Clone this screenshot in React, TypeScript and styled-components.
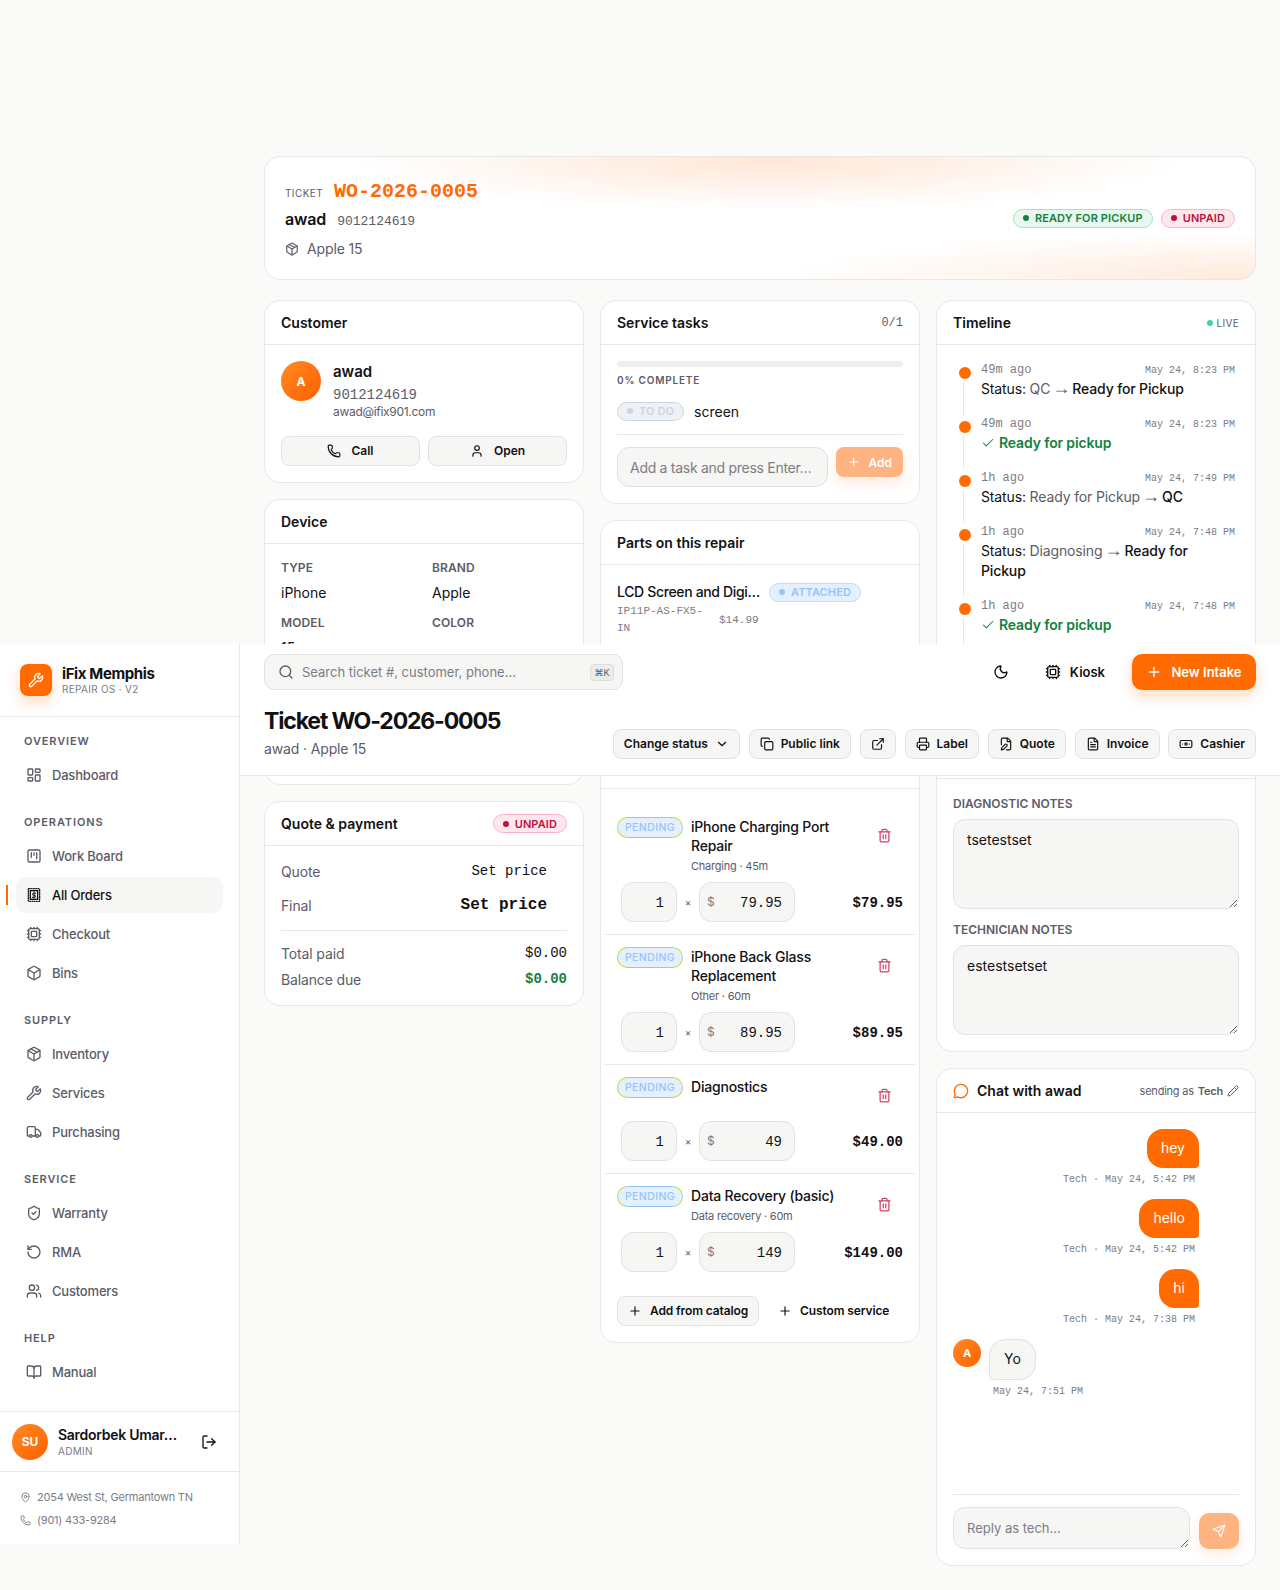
import React from "react";
import styled, { createGlobalStyle } from "styled-components";
import {
  BookOpen,
  Box,
  Banknote,
  Check,
  ChevronDown,
  Copy,
  Cpu,
  ExternalLink,
  FilePen,
  FileText,
  LayoutDashboard,
  LogOut,
  MapPin,
  MessageCircle,
  Moon,
  Package,
  Pencil,
  Phone,
  Plus,
  Printer,
  RotateCcw,
  Search,
  Send,
  ShieldCheck,
  SquareKanban,
  Trash2,
  Truck,
  User,
  Users,
  Wrench,
} from "lucide-react";

const SANS = `Inter, "Noto Sans", sans-serif`;
const MONO = `"Liberation Mono", monospace`;
const ORANGE = "#ff6b00";
const INK = "#111114";
const MUTED = "#5c5c68";
const FAINT = "#7c7c86";
const LINE = "#e7e7e5";
const SURFACE = "#f6f6f4";

const GlobalStyle = createGlobalStyle`
  html, body { margin: 0; padding: 0; background: #fafaf8; }
  body { font-family: ${SANS}; color: ${INK}; }
  * { box-sizing: border-box; }
  input, textarea, button { font-family: inherit; }
`;

const Page = styled.div`
  position: relative;
  height: 1590px;
  overflow: hidden;
`;

const Content = styled.main`
  padding: 156px 24px 0 264px;
  display: flex;
  flex-direction: column;
  gap: 20px;
`;

const Hero = styled.section`
  height: 124px;
  padding: 0 20px;
  display: flex;
  align-items: center;
  justify-content: space-between;
  border: 1px solid ${LINE};
  border-radius: 16px;
  background:
    radial-gradient(ellipse 420px 54px at 51% 0, rgba(255, 107, 0, 0.17), rgba(255, 107, 0, 0) 100%),
    radial-gradient(ellipse 480px 46px at 100% 100%, rgba(255, 107, 0, 0.14), rgba(255, 107, 0, 0) 100%),
    #fff;
`;

const HeroInfo = styled.div`
  display: flex;
  flex-direction: column;
  padding-top: 2px;
`;

const TicketRow = styled.div`
  display: flex;
  align-items: baseline;
  gap: 11px;
  margin-bottom: 3px;
`;

const TicketTag = styled.span`
  font-size: 10px;
  color: ${MUTED};
  letter-spacing: 0.04em;
`;

const TicketNumber = styled.span`
  font-family: ${MONO};
  font-weight: 700;
  font-size: 20px;
  line-height: 26px;
  color: ${ORANGE};
`;

const HeroCustomer = styled.div`
  display: flex;
  align-items: baseline;
  gap: 11px;
  margin-bottom: 6px;
  font-size: 16px;
  line-height: 22px;
  font-weight: 600;
  letter-spacing: -0.01em;
`;

const Mono = styled.span<{ $size?: number; $color?: string; $bold?: boolean }>`
  font-family: ${MONO};
  font-size: ${(p) => p.$size ?? 13}px;
  font-weight: ${(p) => (p.$bold ? 700 : 400)};
  color: ${(p) => p.$color ?? "inherit"};
  letter-spacing: 0;
`;

const HeroDevice = styled.div`
  display: flex;
  align-items: center;
  gap: 8px;
  font-size: 14px;
  line-height: 20px;
  letter-spacing: -0.01em;
  color: ${MUTED};
`;

const ChipRow = styled.div`
  display: flex;
  gap: 8px;
`;

const tones = {
  green: { text: "#15803d", bg: "#e8f8ee", line: "#a6e4bd" },
  red: { text: "#be123c", bg: "#ffe8ed", line: "#fdb3c2" },
  blue: { text: "#93c5fd", bg: "#e5f0ff", line: "#bfdbfe" },
  slate: { text: "#cbd5e1", bg: "#eef2f7", line: "#cbd5e1" },
};

const Chip = styled.span<{ $tone: keyof typeof tones }>`
  display: inline-flex;
  align-items: center;
  flex: none;
  gap: 6px;
  height: 19px;
  padding: 0 9px;
  border: 1px solid ${(p) => tones[p.$tone].line};
  border-radius: 999px;
  background: ${(p) => tones[p.$tone].bg};
  color: ${(p) => tones[p.$tone].text};
  font-size: 11px;
  font-weight: 600;
  letter-spacing: 0.01em;
  white-space: nowrap;

  &::before {
    content: "";
    width: 6px;
    height: 6px;
    border-radius: 50%;
    background: currentColor;
  }
`;

const PendingChip = styled.span`
  flex: none;
  width: 66px;
  height: 21px;
  display: inline-flex;
  align-items: center;
  justify-content: center;
  border: 1px solid transparent;
  border-radius: 11px;
  background:
    linear-gradient(#e5f0ff, #e5f0ff) padding-box,
    conic-gradient(
        #93c5fd 0 66deg,
        #c6e02a 70deg 84deg,
        #93c5fd 88deg 92deg,
        #c6e02a 96deg 110deg,
        #93c5fd 114deg 246deg,
        #c6e02a 250deg 264deg,
        #93c5fd 268deg 272deg,
        #c6e02a 276deg 290deg,
        #93c5fd 294deg
      )
      border-box;
  color: #93c5fd;
  font-size: 10.5px;
  font-weight: 500;
  letter-spacing: 0.04em;
`;

const Columns = styled.div`
  display: grid;
  grid-template-columns: repeat(3, 320px);
  gap: 16px;
  align-items: start;
`;

const Column = styled.div`
  display: flex;
  flex-direction: column;
  gap: 16px;
`;

const Card = styled.section<{ $height?: number }>`
  display: flex;
  flex-direction: column;
  height: ${(p) => (p.$height ? `${p.$height}px` : "auto")};
  overflow: hidden;
  background: #fff;
  border: 1px solid ${LINE};
  border-radius: 16px;
`;

const CardHead = styled.header`
  flex: none;
  height: 44px;
  padding: 0 16px;
  display: flex;
  align-items: center;
  justify-content: space-between;
  border-bottom: 1px solid ${LINE};
`;

const CardTitle = styled.h3`
  margin: 0;
  display: flex;
  align-items: center;
  gap: 8px;
  font-size: 14px;
  line-height: 20px;
  font-weight: 600;
`;

const CardBody = styled.div`
  padding: 16px;
`;

const QuoteBody = styled(CardBody)`
  padding: 15px 16px 16px;
`;

const NotesBody = styled(CardBody)`
  padding-top: 17px;
`;

const CustomerRow = styled.div`
  display: flex;
  gap: 12px;
`;

const Avatar = styled.div<{ $size: number; $font: number }>`
  flex: none;
  width: ${(p) => p.$size}px;
  height: ${(p) => p.$size}px;
  border-radius: 50%;
  display: flex;
  align-items: center;
  justify-content: center;
  background: linear-gradient(135deg, #ff8a24, #ff6000);
  color: #fff;
  font-size: ${(p) => p.$font}px;
  font-weight: 700;
`;

const CustomerName = styled.div`
  font-size: 15px;
  line-height: 20px;
  font-weight: 600;
  margin-top: 1px;
`;

const CustomerPhone = styled.div`
  font-family: ${MONO};
  font-size: 14px;
  line-height: 20px;
  color: ${MUTED};
  margin-top: 3px;
`;

const CustomerMail = styled.div`
  margin-top: -1px;
  font-size: 12px;
  line-height: 16px;
  letter-spacing: -0.025em;
  color: ${MUTED};
`;

const ButtonPair = styled.div`
  display: grid;
  grid-template-columns: 1fr 1fr;
  gap: 8px;
  margin-top: 16px;
`;

const Button = styled.button`
  height: 30px;
  padding: 0 10px 1px;
  display: inline-flex;
  align-items: center;
  justify-content: center;
  gap: 10px;
  background: ${SURFACE};
  border: 1px solid #e2e2e0;
  border-radius: 8px;
  color: ${INK};
  font-size: 12px;
  font-weight: 600;
  white-space: nowrap;
`;

const HeaderButton = styled(Button)`
  gap: 7px;
`;

const CatalogButton = styled(Button)`
  gap: 8px;
  letter-spacing: -0.01em;
`;

const GhostButton = styled(CatalogButton)`
  background: transparent;
  border-color: transparent;
`;

const DetailGrid = styled.dl`
  margin: 0;
  display: grid;
  grid-template-columns: 1fr 1fr;
  column-gap: 16px;
  row-gap: 12px;
`;

const FieldLabel = styled.dt`
  font-size: 12px;
  line-height: 16px;
  font-weight: 600;
  color: ${MUTED};
  letter-spacing: 0.01em;
  margin-bottom: 7px;
`;

const FieldValue = styled.dd`
  margin: 0;
  font-size: 14px;
  line-height: 20px;
`;

const ProgressTrack = styled.div`
  height: 6px;
  border-radius: 3px;
  background: #eeeeec;
`;

const ProgressLabel = styled.div`
  margin-top: 6px;
  font-size: 10px;
  line-height: 14px;
  font-weight: 600;
  letter-spacing: 0.08em;
  color: ${MUTED};
`;

const TaskRow = styled.div`
  display: flex;
  align-items: center;
  gap: 10px;
  height: 20px;
  margin-top: 14px;
  font-size: 14px;
`;

const Divider = styled.hr`
  margin: 13px 0 12px;
  border: 0;
  border-top: 1px solid ${LINE};
`;

const QuoteDivider = styled(Divider)`
  margin: 15px 0 12px;
`;

const TaskForm = styled.div`
  display: flex;
  align-items: flex-start;
  gap: 8px;
`;

const TextInput = styled.input`
  min-width: 0;
  flex: 1;
  height: 40px;
  padding: 0 12px;
  background: ${SURFACE};
  border: 1px solid #e2e2e0;
  border-radius: 12px;
  font-size: 14px;
  letter-spacing: -0.02em;
  color: ${INK};

  &::placeholder {
    color: ${FAINT};
  }
`;

const PrimarySoft = styled.button`
  flex: none;
  width: 67px;
  height: 30px;
  padding: 0 11px;
  display: inline-flex;
  align-items: center;
  gap: 8px;
  background: #ffb380;
  border: 0;
  border-radius: 8px;
  color: #fff;
  font-size: 12px;
  font-weight: 600;
  box-shadow: 0 6px 14px rgba(255, 107, 0, 0.14);
`;

const PartTop = styled.div`
  display: flex;
  align-items: center;
  gap: 11px;
  margin-top: 1px;
`;

const PartName = styled.div`
  width: 141px;
  font-size: 14px;
  line-height: 20px;
  font-weight: 500;
  letter-spacing: -0.025em;
  white-space: nowrap;
`;

const PartMeta = styled.div`
  display: flex;
  align-items: center;
  gap: 12px;
  margin-top: 1px;
  font-family: ${MONO};
  font-size: 11px;
  line-height: 17px;
  color: ${FAINT};
`;

const PartSku = styled.div`
  width: 90px;
`;

const LiveTag = styled.span`
  display: inline-flex;
  align-items: center;
  gap: 4px;
  font-size: 10px;
  color: ${MUTED};
  letter-spacing: 0.03em;

  &::before {
    content: "";
    width: 6px;
    height: 6px;
    border-radius: 50%;
    background: #34d8a4;
  }
`;

const TimelineEntry = styled.div`
  display: flex;
  gap: 10px;
  padding-left: 6px;
  padding-right: 4px;
`;

const Rail = styled.div`
  flex: none;
  width: 12px;
  padding-top: 6px;
  display: flex;
  flex-direction: column;
  gap: 3px;

  &::before {
    content: "";
    flex: none;
    width: 12px;
    height: 12px;
    border-radius: 50%;
    background: ${ORANGE};
  }

  &::after {
    content: "";
    flex: 1;
    width: 1px;
    margin-left: 4px;
    background: ${LINE};
  }
`;

const EntryBody = styled.div`
  flex: 1;
  padding-bottom: 16px;
`;

const EntryTime = styled.div`
  display: flex;
  justify-content: space-between;
  align-items: center;
  height: 16px;
  margin-top: 1px;
  font-family: ${MONO};
  font-size: 12px;
  color: ${FAINT};
`;

const EntryDate = styled.span`
  font-size: 10px;
`;

const EntryText = styled.div`
  margin-top: 1px;
  font-size: 14px;
  line-height: 20px;
  letter-spacing: -0.01em;
`;

const Dim = styled.span`
  color: ${MUTED};
`;

const Arrow = styled.span`
  margin: 0 2px;
  font-family: "Liberation Sans", sans-serif;
  font-size: 18px;
  line-height: 1;
  letter-spacing: 0;
  color: ${MUTED};
`;

const Strong = styled.span`
  font-weight: 500;
`;

const GoodText = styled.div`
  display: flex;
  align-items: center;
  gap: 4px;
  color: #15803d;
  font-weight: 600;
`;

const QuoteRow = styled.div<{ $gap?: number }>`
  display: flex;
  align-items: center;
  justify-content: space-between;
  height: 20px;
  margin-top: ${(p) => p.$gap ?? 0}px;
  font-size: 14px;
  letter-spacing: -0.01em;
  color: ${MUTED};
`;

const PriceSlot = styled.span<{ $big?: boolean }>`
  padding-right: 20px;
  font-family: ${MONO};
  font-size: ${(p) => (p.$big ? 16 : 14)}px;
  font-weight: ${(p) => (p.$big ? 700 : 400)};
  letter-spacing: 0;
  color: ${INK};
`;

const ServiceBody = styled.div`
  padding: 16px 4px;
`;

const ServiceRow = styled.div<{ $last?: boolean }>`
  padding: 12px;
  border-bottom: 1px solid ${(p) => (p.$last ? "transparent" : LINE)};
`;

const ServiceHead = styled.div`
  display: flex;
  align-items: flex-start;
  gap: 8px;
  margin-bottom: 8px;
`;

const ServiceInfo = styled.div`
  flex: 1;
  min-height: 36px;
`;

const ServiceName = styled.div<{ $wide?: boolean }>`
  font-size: 14px;
  line-height: 19px;
  font-weight: 500;
  letter-spacing: -0.015em;
  max-width: ${(p) => (p.$wide ? "none" : "160px")};
`;

const ServiceSub = styled.div`
  margin-top: 3px;
  font-size: 11px;
  line-height: 16px;
  letter-spacing: -0.02em;
  color: ${MUTED};
`;

const TrashButton = styled.div`
  flex: none;
  width: 36px;
  height: 36px;
  margin-right: 1px;
  display: flex;
  align-items: center;
  justify-content: center;
  color: #d1436a;
`;

const PriceLine = styled.div`
  display: flex;
  align-items: center;
  padding-left: 4px;
`;

const AmountInput = styled.input<{ $width: number }>`
  width: ${(p) => p.$width}px;
  height: 40px;
  padding: 2px 12px 0;
  background: ${SURFACE};
  border: 1px solid #e2e2e0;
  border-radius: 12px;
  font-family: ${MONO};
  font-size: 14px;
  color: ${INK};
  text-align: right;
`;

const Times = styled.span`
  width: 22px;
  text-align: center;
  font-size: 10px;
  color: ${MUTED};
`;

const PriceBox = styled.div`
  position: relative;
  display: flex;
`;

const Dollar = styled.span`
  position: absolute;
  left: 8px;
  top: 12px;
  font-size: 12px;
  line-height: 16px;
  color: ${FAINT};
`;

const LineTotal = styled.span`
  margin-left: auto;
  margin-top: 2px;
  font-family: ${MONO};
  font-size: 14px;
  font-weight: 700;
`;

const ServiceActions = styled.div`
  display: flex;
  align-items: center;
  gap: 8px;
  padding: 11px 12px 0;
`;

const NoteLabel = styled.label`
  display: block;
  margin: 13px 0 7px;
  font-size: 12px;
  line-height: 16px;
  font-weight: 600;
  color: ${MUTED};

  &:first-child {
    margin-top: 0;
  }
`;

const NoteArea = styled.textarea`
  display: block;
  width: 100%;
  height: 90px;
  padding: 10px 13px;
  background: ${SURFACE};
  border: 1px solid #e2e2e0;
  border-radius: 12px;
  font-size: 14px;
  line-height: 20px;
  color: ${INK};
`;

const SendingAs = styled.div`
  display: flex;
  align-items: center;
  gap: 4px;
  font-size: 11px;
  letter-spacing: -0.02em;
  color: ${MUTED};

  b {
    font-weight: 600;
  }
`;

const ChatLog = styled.div`
  flex: 1;
  padding: 16px 56px 0 16px;
  display: flex;
  flex-direction: column;
`;

const Outgoing = styled.div`
  align-self: flex-end;
  display: flex;
  flex-direction: column;
  align-items: flex-end;
  margin-bottom: 12px;
`;

const BubbleOut = styled.div`
  padding: 8px 14px 10px;
  border-radius: 16px 16px 4px 16px;
  background: ${ORANGE};
  color: #fff;
  font-size: 14px;
  line-height: 21px;
`;

const ChatMeta = styled.div`
  margin-top: 5px;
  padding: 0 4px;
  font-family: ${MONO};
  font-size: 10px;
  line-height: 14px;
  color: ${FAINT};
  white-space: pre;
`;

const Incoming = styled.div`
  display: flex;
  gap: 8px;
`;

const BubbleIn = styled.div`
  align-self: flex-start;
  padding: 8px 14px 10px;
  background: ${SURFACE};
  border: 1px solid #e2e2e0;
  border-radius: 16px 16px 16px 4px;
  font-size: 14px;
  line-height: 21px;
`;

const IncomingStack = styled.div`
  display: flex;
  flex-direction: column;
  align-items: flex-start;
`;

const Composer = styled.div`
  margin: 0 16px 16px;
  padding-top: 12px;
  border-top: 1px solid ${LINE};
  display: flex;
  align-items: flex-end;
  gap: 9px;
`;

const ComposerInput = styled.textarea`
  flex: 1;
  min-width: 0;
  height: 42px;
  padding: 10px 13px;
  background: ${SURFACE};
  border: 1px solid #e2e2e0;
  border-radius: 12px;
  font-size: 13px;
  line-height: 20px;

  &::placeholder {
    color: ${FAINT};
  }
`;

const SendButton = styled.button`
  flex: none;
  width: 40px;
  height: 36px;
  border: 0;
  border-radius: 10px;
  display: flex;
  align-items: center;
  justify-content: center;
  background: #ffb380;
  color: #fff;
  box-shadow: 0 6px 14px rgba(255, 107, 0, 0.12);
`;

const Shell = styled.div`
  position: absolute;
  top: 644px;
  left: 0;
  right: 0;
  height: 900px;
  display: flex;
  align-items: flex-start;
`;

const Sidebar = styled.aside`
  flex: none;
  width: 240px;
  height: 900px;
  display: flex;
  flex-direction: column;
  background: #fff;
  border-right: 1px solid ${LINE};
`;

const Brand = styled.div`
  flex: none;
  height: 73px;
  padding: 20px 20px 0;
  display: flex;
  gap: 10px;
  border-bottom: 1px solid ${LINE};
`;

const BrandMark = styled.div`
  flex: none;
  width: 32px;
  height: 32px;
  border-radius: 8px;
  display: flex;
  align-items: center;
  justify-content: center;
  background: ${ORANGE};
  color: #fff;
  box-shadow: 0 6px 14px rgba(255, 107, 0, 0.25);
`;

const BrandName = styled.div`
  font-size: 15px;
  line-height: 20px;
  font-weight: 700;
  letter-spacing: -0.025em;
`;

const BrandSub = styled.div`
  margin-top: -1px;
  font-size: 10px;
  line-height: 12px;
  color: ${FAINT};
  letter-spacing: 0.03em;
`;

const Nav = styled.nav`
  flex: 1;
  padding: 16px 16px 0;
  display: flex;
  flex-direction: column;
  gap: 21px;
`;

const NavGroup = styled.div`
  display: flex;
  flex-direction: column;
  gap: 3px;
`;

const NavLabel = styled.div`
  margin-bottom: 5px;
  padding-left: 8px;
  font-size: 11px;
  line-height: 16px;
  font-weight: 600;
  letter-spacing: 0.08em;
  color: ${MUTED};
`;

const NavItem = styled.a<{ $active?: boolean }>`
  position: relative;
  height: 36px;
  padding-left: 10px;
  display: flex;
  align-items: center;
  gap: 10px;
  border-radius: 10px;
  font-size: 13px;
  font-weight: 500;
  letter-spacing: -0.015em;
  color: ${(p) => (p.$active ? INK : MUTED)};
  background: ${(p) => (p.$active ? SURFACE : "transparent")};

  ${(p) =>
    p.$active &&
    `&::before {
      content: "";
      position: absolute;
      left: -10px;
      top: 8px;
      width: 2px;
      height: 20px;
      background: ${ORANGE};
    }`}
`;

const UserRow = styled.div`
  flex: none;
  height: 61px;
  padding: 0 12px;
  display: flex;
  align-items: center;
  gap: 10px;
  border-top: 1px solid ${LINE};
  border-bottom: 1px solid ${LINE};
`;

const UserInfo = styled.div`
  flex: 1;
  min-width: 0;
`;

const UserName = styled.div`
  font-size: 14px;
  line-height: 18px;
  font-weight: 600;
  letter-spacing: -0.02em;
  white-space: nowrap;
`;

const UserRole = styled.div`
  font-size: 10px;
  line-height: 14px;
  color: ${FAINT};
  letter-spacing: 0.03em;
`;

const LogoutIcon = styled.div`
  margin-right: 10px;
  display: flex;
  color: ${INK};
`;

const ShopInfo = styled.div`
  flex: none;
  height: 72px;
  padding: 17px 20px 0;
  display: flex;
  flex-direction: column;
  gap: 7px;
  font-size: 11px;
  line-height: 16px;
  letter-spacing: -0.02em;
  color: ${FAINT};
`;

const ShopLine = styled.div`
  display: flex;
  align-items: center;
  gap: 6px;
`;

const TopArea = styled.div`
  flex: 1;
  height: 132px;
  padding: 10px 24px 16px;
  display: flex;
  flex-direction: column;
  gap: 14px;
  background: #fff;
  border-bottom: 1px solid ${LINE};
`;

const TopBar = styled.div`
  display: flex;
  align-items: center;
`;

const SearchBox = styled.div`
  width: 359px;
  height: 36px;
  padding: 0 8px 0 13px;
  display: flex;
  align-items: center;
  gap: 8px;
  background: ${SURFACE};
  border: 1px solid #e2e2e0;
  border-radius: 10px;
`;

const SearchText = styled.span`
  flex: 1;
  font-size: 13px;
  color: ${FAINT};
`;

const Kbd = styled.kbd`
  width: 24px;
  height: 17px;
  display: flex;
  align-items: center;
  justify-content: center;
  background: #ececea;
  border: 1px solid #dcdcda;
  border-radius: 4px;
  font-family: ${SANS};
  font-size: 9px;
  color: ${MUTED};
`;

const TopActions = styled.div`
  margin-left: auto;
  display: flex;
  align-items: center;
`;

const IconSlot = styled.div`
  width: 16px;
  display: flex;
  margin-right: 36px;
`;

const KioskLink = styled.div`
  display: flex;
  align-items: center;
  gap: 9px;
  margin-right: 27px;
  font-size: 13px;
  font-weight: 600;
`;

const NewIntake = styled.button`
  width: 124px;
  height: 36px;
  border: 0;
  border-radius: 10px;
  display: flex;
  align-items: center;
  justify-content: center;
  gap: 9px;
  background: ${ORANGE};
  color: #fff;
  font-size: 13px;
  font-weight: 600;
  box-shadow: 0 6px 14px rgba(255, 107, 0, 0.25);
`;

const TitleRow = styled.div`
  display: flex;
  align-items: flex-end;
  justify-content: space-between;
`;

const PageTitle = styled.h1`
  margin: 0 0 1px;
  font-size: 23px;
  line-height: 34px;
  font-weight: 700;
  letter-spacing: -0.05em;
`;

const PageSub = styled.div`
  font-size: 14px;
  line-height: 20px;
  letter-spacing: -0.01em;
  color: ${MUTED};
`;

const ActionRow = styled.div`
  display: flex;
  gap: 8.8px;
`;

const ReceiptIcon = () => (
  <svg width="16" height="16" viewBox="0 0 24 24" fill="none" stroke="currentColor" strokeWidth="2" strokeLinecap="round">
    <rect x="3.5" y="2.5" width="17" height="19" rx="1" strokeDasharray="1.2 2.2" />
    <rect x="6.5" y="5.5" width="11" height="13" />
    <path d="M12 7.5v9M14.5 9.5h-3.2a1.5 1.5 0 0 0 0 3h1.6a1.5 1.5 0 0 1 0 3H9.5" strokeWidth="1.5" />
  </svg>
);

const navGroups = [
  { label: "OVERVIEW", items: [{ name: "Dashboard", icon: <LayoutDashboard size={16} /> }] },
  {
    label: "OPERATIONS",
    items: [
      { name: "Work Board", icon: <SquareKanban size={16} /> },
      { name: "All Orders", icon: <ReceiptIcon />, active: true },
      { name: "Checkout", icon: <Cpu size={16} /> },
      { name: "Bins", icon: <Box size={16} /> },
    ],
  },
  {
    label: "SUPPLY",
    items: [
      { name: "Inventory", icon: <Package size={16} /> },
      { name: "Services", icon: <Wrench size={16} /> },
      { name: "Purchasing", icon: <Truck size={16} /> },
    ],
  },
  {
    label: "SERVICE",
    items: [
      { name: "Warranty", icon: <ShieldCheck size={16} /> },
      { name: "RMA", icon: <RotateCcw size={16} /> },
      { name: "Customers", icon: <Users size={16} /> },
    ],
  },
  { label: "HELP", items: [{ name: "Manual", icon: <BookOpen size={16} /> }] },
];

const services = [
  { name: "iPhone Charging Port Repair", sub: "Charging · 45m", price: "79.95", total: "$79.95" },
  { name: "iPhone Back Glass Replacement", sub: "Other · 60m", price: "89.95", total: "$89.95" },
  { name: "Diagnostics", sub: "", price: "49", total: "$49.00" },
  { name: "Data Recovery (basic)", sub: "Data recovery · 60m", price: "149", total: "$149.00", wide: true },
];

const Ready = () => (
  <GoodText>
    <Check size={14} strokeWidth={1.75} />
    Ready for pickup
  </GoodText>
);

const timeline = [
  {
    ago: "49m ago",
    at: "May 24, 8:23 PM",
    body: (
      <>
        Status: <Dim>QC</Dim>
        <Arrow>→</Arrow>
        <Strong>Ready for Pickup</Strong>
      </>
    ),
  },
  { ago: "49m ago", at: "May 24, 8:23 PM", body: <Ready /> },
  {
    ago: "1h ago",
    at: "May 24, 7:49 PM",
    body: (
      <>
        Status: <Dim>Ready for Pickup</Dim>
        <Arrow>→</Arrow>
        <Strong>QC</Strong>
      </>
    ),
  },
  {
    ago: "1h ago",
    at: "May 24, 7:48 PM",
    body: (
      <>
        Status: <Dim>Diagnosing</Dim>
        <Arrow>→</Arrow>
        <Strong>Ready for Pickup</Strong>
      </>
    ),
  },
  { ago: "1h ago", at: "May 24, 7:48 PM", body: <Ready /> },
  { ago: "1h ago", at: "May 24, 7:47 PM", body: <Ready /> },
];

const outgoing = [
  { text: "hey", at: "Tech · May 24, 5:42 PM" },
  { text: "hello", at: "Tech · May 24, 5:42 PM" },
  { text: "hi", at: "Tech · May 24, 7:38 PM" },
];

const App = () => {
  return (
    <Page>
      <GlobalStyle />
      <Content>
        <Hero>
          <HeroInfo>
            <TicketRow>
              <TicketTag>TICKET</TicketTag>
              <TicketNumber>WO-2026-0005</TicketNumber>
            </TicketRow>
            <HeroCustomer>
              awad
              <Mono $color={MUTED}>9012124619</Mono>
            </HeroCustomer>
            <HeroDevice>
              <Package size={14} />
              Apple 15
            </HeroDevice>
          </HeroInfo>
          <ChipRow>
            <Chip $tone="green">READY FOR PICKUP</Chip>
            <Chip $tone="red">UNPAID</Chip>
          </ChipRow>
        </Hero>

        <Columns>
          <Column>
            <Card>
              <CardHead>
                <CardTitle>Customer</CardTitle>
              </CardHead>
              <CardBody>
                <CustomerRow>
                  <Avatar $size={40} $font={12}>A</Avatar>
                  <div>
                    <CustomerName>awad</CustomerName>
                    <CustomerPhone>9012124619</CustomerPhone>
                    <CustomerMail>awad@ifix901.com</CustomerMail>
                  </div>
                </CustomerRow>
                <ButtonPair>
                  <Button>
                    <Phone size={14} />
                    Call
                  </Button>
                  <Button>
                    <User size={14} />
                    Open
                  </Button>
                </ButtonPair>
              </CardBody>
            </Card>

            <Card $height={286}>
              <CardHead>
                <CardTitle>Device</CardTitle>
              </CardHead>
              <CardBody>
                <DetailGrid>
                  <div>
                    <FieldLabel>TYPE</FieldLabel>
                    <FieldValue>iPhone</FieldValue>
                  </div>
                  <div>
                    <FieldLabel>BRAND</FieldLabel>
                    <FieldValue>Apple</FieldValue>
                  </div>
                  <div>
                    <FieldLabel>MODEL</FieldLabel>
                    <FieldValue>15</FieldValue>
                  </div>
                  <div>
                    <FieldLabel>COLOR</FieldLabel>
                    <FieldValue>—</FieldValue>
                  </div>
                </DetailGrid>
              </CardBody>
            </Card>

            <Card>
              <CardHead>
                <CardTitle>Quote &amp; payment</CardTitle>
                <Chip $tone="red">UNPAID</Chip>
              </CardHead>
              <QuoteBody>
                <QuoteRow>
                  Quote
                  <PriceSlot>Set price</PriceSlot>
                </QuoteRow>
                <QuoteRow $gap={14}>
                  Final
                  <PriceSlot $big>Set price</PriceSlot>
                </QuoteRow>
                <QuoteDivider />
                <QuoteRow>
                  Total paid
                  <Mono $size={14} $color={INK}>$0.00</Mono>
                </QuoteRow>
                <QuoteRow $gap={6}>
                  Balance due
                  <Mono $size={14} $color="#15803d" $bold>$0.00</Mono>
                </QuoteRow>
              </QuoteBody>
            </Card>
          </Column>

          <Column>
            <Card>
              <CardHead>
                <CardTitle>Service tasks</CardTitle>
                <Mono $size={12} $color={MUTED}>0/1</Mono>
              </CardHead>
              <CardBody>
                <ProgressTrack />
                <ProgressLabel>0% COMPLETE</ProgressLabel>
                <TaskRow>
                  <Chip $tone="slate">TO DO</Chip>
                  screen
                </TaskRow>
                <Divider />
                <TaskForm>
                  <TextInput placeholder="Add a task and press Enter…" />
                  <PrimarySoft>
                    <Plus size={14} />
                    Add
                  </PrimarySoft>
                </TaskForm>
              </CardBody>
            </Card>

            <Card $height={208}>
              <CardHead>
                <CardTitle>Parts on this repair</CardTitle>
              </CardHead>
              <CardBody>
                <PartTop>
                  <PartName>LCD Screen and Digi…</PartName>
                  <Chip $tone="blue">ATTACHED</Chip>
                </PartTop>
                <PartMeta>
                  <PartSku>IP11P-AS-FX5-IN</PartSku>
                  <span>$14.99</span>
                </PartMeta>
              </CardBody>
            </Card>

            <Card>
              <CardHead>
                <CardTitle>Services</CardTitle>
              </CardHead>
              <ServiceBody>
                {services.map((s, i) => (
                  <ServiceRow key={s.name} $last={i === services.length - 1}>
                    <ServiceHead>
                      <PendingChip>PENDING</PendingChip>
                      <ServiceInfo>
                        <ServiceName $wide={s.wide}>{s.name}</ServiceName>
                        {s.sub && <ServiceSub>{s.sub}</ServiceSub>}
                      </ServiceInfo>
                      <TrashButton>
                        <Trash2 size={15} />
                      </TrashButton>
                    </ServiceHead>
                    <PriceLine>
                      <AmountInput $width={56} defaultValue="1" />
                      <Times>×</Times>
                      <PriceBox>
                        <Dollar>$</Dollar>
                        <AmountInput $width={96} defaultValue={s.price} />
                      </PriceBox>
                      <LineTotal>{s.total}</LineTotal>
                    </PriceLine>
                  </ServiceRow>
                ))}
                <ServiceActions>
                  <CatalogButton>
                    <Plus size={14} />
                    Add from catalog
                  </CatalogButton>
                  <GhostButton>
                    <Plus size={14} />
                    Custom service
                  </GhostButton>
                </ServiceActions>
              </ServiceBody>
            </Card>
          </Column>

          <Column>
            <Card $height={418}>
              <CardHead>
                <CardTitle>Timeline</CardTitle>
                <LiveTag>LIVE</LiveTag>
              </CardHead>
              <CardBody>
                {timeline.map((t, i) => (
                  <TimelineEntry key={i}>
                    <Rail />
                    <EntryBody>
                      <EntryTime>
                        {t.ago}
                        <EntryDate>{t.at}</EntryDate>
                      </EntryTime>
                      <EntryText>{t.body}</EntryText>
                    </EntryBody>
                  </TimelineEntry>
                ))}
              </CardBody>
            </Card>

            <Card>
              <CardHead>
                <CardTitle>Notes</CardTitle>
              </CardHead>
              <NotesBody>
                <NoteLabel>DIAGNOSTIC NOTES</NoteLabel>
                <NoteArea defaultValue="tsetestset" />
                <NoteLabel>TECHNICIAN NOTES</NoteLabel>
                <NoteArea defaultValue="estestsetset" />
              </NotesBody>
            </Card>

            <Card $height={498}>
              <CardHead>
                <CardTitle>
                  <MessageCircle size={16} color={ORANGE} />
                  Chat with awad
                </CardTitle>
                <SendingAs>
                  sending as <b>Tech</b>
                  <Pencil size={12} />
                </SendingAs>
              </CardHead>
              <ChatLog>
                {outgoing.map((m) => (
                  <Outgoing key={m.text}>
                    <BubbleOut>{m.text}</BubbleOut>
                    <ChatMeta>{m.at}</ChatMeta>
                  </Outgoing>
                ))}
                <Incoming>
                  <Avatar $size={28} $font={11}>A</Avatar>
                  <IncomingStack>
                    <BubbleIn>Yo</BubbleIn>
                    <ChatMeta>May 24, 7:51 PM</ChatMeta>
                  </IncomingStack>
                </Incoming>
              </ChatLog>
              <Composer>
                <ComposerInput placeholder="Reply as tech…" />
                <SendButton>
                  <Send size={14} />
                </SendButton>
              </Composer>
            </Card>
          </Column>
        </Columns>
      </Content>

      <Shell>
        <Sidebar>
          <Brand>
            <BrandMark>
              <Wrench size={16} />
            </BrandMark>
            <div>
              <BrandName>iFix Memphis</BrandName>
              <BrandSub>REPAIR OS · V2</BrandSub>
            </div>
          </Brand>
          <Nav>
            {navGroups.map((group) => (
              <NavGroup key={group.label}>
                <NavLabel>{group.label}</NavLabel>
                {group.items.map((item) => (
                  <NavItem key={item.name} $active={"active" in item}>
                    {item.icon}
                    {item.name}
                  </NavItem>
                ))}
              </NavGroup>
            ))}
          </Nav>
          <UserRow>
            <Avatar $size={36} $font={12}>SU</Avatar>
            <UserInfo>
              <UserName>Sardorbek Umar…</UserName>
              <UserRole>ADMIN</UserRole>
            </UserInfo>
            <LogoutIcon>
              <LogOut size={16} />
            </LogoutIcon>
          </UserRow>
          <ShopInfo>
            <ShopLine>
              <MapPin size={11} />
              2054 West St, Germantown TN
            </ShopLine>
            <ShopLine>
              <Phone size={11} />
              (901) 433-9284
            </ShopLine>
          </ShopInfo>
        </Sidebar>

        <TopArea>
          <TopBar>
            <SearchBox>
              <Search size={16} color={MUTED} />
              <SearchText>Search ticket #, customer, phone…</SearchText>
              <Kbd>⌘K</Kbd>
            </SearchBox>
            <TopActions>
              <IconSlot>
                <Moon size={16} />
              </IconSlot>
              <KioskLink>
                <Cpu size={16} />
                Kiosk
              </KioskLink>
              <NewIntake>
                <Plus size={16} />
                New Intake
              </NewIntake>
            </TopActions>
          </TopBar>
          <TitleRow>
            <div>
              <PageTitle>Ticket WO-2026-0005</PageTitle>
              <PageSub>awad · Apple 15</PageSub>
            </div>
            <ActionRow>
              <HeaderButton>
                Change status
                <ChevronDown size={14} />
              </HeaderButton>
              <HeaderButton>
                <Copy size={14} />
                Public link
              </HeaderButton>
              <HeaderButton>
                <ExternalLink size={14} />
              </HeaderButton>
              <HeaderButton>
                <Printer size={14} />
                Label
              </HeaderButton>
              <HeaderButton>
                <FilePen size={14} />
                Quote
              </HeaderButton>
              <HeaderButton>
                <FileText size={14} />
                Invoice
              </HeaderButton>
              <HeaderButton>
                <Banknote size={14} />
                Cashier
              </HeaderButton>
            </ActionRow>
          </TitleRow>
        </TopArea>
      </Shell>
    </Page>
  );
};

export default App;
